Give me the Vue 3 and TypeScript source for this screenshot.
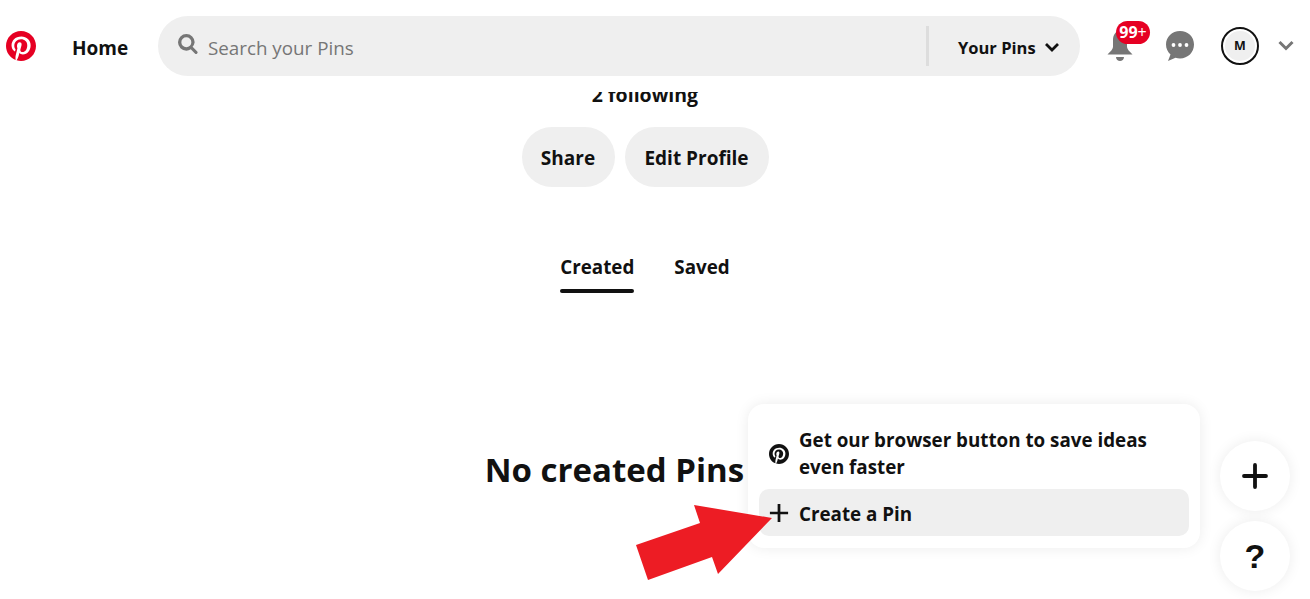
<script setup lang="ts">
const pinPath =
  'M0 12c0 5.123 3.211 9.497 7.73 11.218-.11-.937-.227-2.482.025-3.566.217-.932 1.401-5.938 1.401-5.938s-.357-.715-.357-1.774c0-1.66.962-2.9 2.161-2.9 1.02 0 1.512.765 1.512 1.682 0 1.025-.653 2.557-.99 3.978-.281 1.189.597 2.159 1.769 2.159 2.123 0 3.756-2.239 3.756-5.471 0-2.861-2.056-4.86-4.991-4.86-3.398 0-5.393 2.549-5.393 5.184 0 1.027.395 2.127.889 2.726a.36.36 0 0 1 .083.343c-.091.378-.293 1.189-.332 1.355-.053.218-.173.265-.4.159-1.492-.694-2.424-2.875-2.424-4.627 0-3.769 2.737-7.229 7.892-7.229 4.144 0 7.365 2.953 7.365 6.899 0 4.117-2.595 7.431-6.199 7.431-1.211 0-2.348-.63-2.738-1.373 0 0-.599 2.282-.744 2.84-.282 1.084-1.064 2.456-1.549 3.235C9.584 23.815 10.77 24 12 24c6.627 0 12-5.373 12-12S18.627 0 12 0 0 5.373 0 12'
</script>

<template>
  <div class="page">
    <header class="top">
      <svg class="logo" viewBox="0 0 24 24"><path :d="pinPath" fill="#e60023" /></svg>
      <a class="home">Home</a>
      <div class="search">
        <svg class="lens" viewBox="0 0 24 24"><path d="M10 16a6 6 0 1 1 0-12 6 6 0 0 1 0 12zm13.1 4.9-5.6-5.6A9.9 9.9 0 0 0 20 10 10 10 0 1 0 10 20c2 0 3.800-.6 5.300-1.600l5.600 5.600a2 2 0 0 0 2.200-3.100z" fill="#767676" /></svg>
        <span class="placeholder">Search your Pins</span>
        <span class="divider"></span>
        <span class="scope">Your Pins</span>
        <svg class="chev" viewBox="0 0 16 11"><path d="M2 2l6 6 6-6" fill="none" stroke="#111" stroke-width="2.800" /></svg>
      </div>
      <div class="bell-wrap">
        <svg class="bell" viewBox="0 0 26 32"><path d="M13 1C8.500 1 6 5 6 10v7c0 2-2.500 4.500-5.500 7.500h25C22.500 21.500 20 19 20 17v-7c0-5-2.500-9-7-9zM9 27h8c0 2.500-2 4-4 4s-4-1.500-4-4z" fill="#767676" /></svg>
        <span class="badge">99<span class="badge-plus">+</span></span>
      </div>
      <svg class="chat" viewBox="0 0 28 30"><path d="M14 0C6 0 0 6 0 13.500c0 4 1.800 7.600 4.500 10L2 30l7.500-3.200c1.400.4 3 .6 4.500.6 8 0 14-6 14-13.900S22 0 14 0z" fill="#767676" /><circle cx="7.500" cy="14" r="1.900" fill="#fff" /><circle cx="14" cy="14" r="1.900" fill="#fff" /><circle cx="20.500" cy="14" r="1.900" fill="#fff" /></svg>
      <div class="avatar"><span>M</span></div>
      <svg class="chev-grey" viewBox="0 0 16 11"><path d="M1.500 2l6.500 6.500L14.500 2" fill="none" stroke="#767676" stroke-width="3" /></svg>
    </header>

    <main class="profile">
      <p class="following">2 following</p>
      <div class="actions">
        <button class="pill">Share</button>
        <button class="pill">Edit Profile</button>
      </div>
      <nav class="tabs">
        <span class="tab active">Created</span>
        <span class="tab">Saved</span>
      </nav>
      <h1 class="empty">No created Pins yet</h1>
    </main>

    <aside class="popup">
      <div class="row tip">
        <svg class="row-ico small" viewBox="0 0 24 24"><path :d="pinPath" fill="#111" /></svg>
        <span>Get our browser button to save ideas even faster</span>
      </div>
      <div class="row create">
        <svg class="row-ico" viewBox="0 0 22 22"><path d="M11 1v20M1 11h20" stroke="#111" stroke-width="3" /></svg>
        <span>Create a Pin</span>
      </div>
    </aside>

    <button class="fab plus" aria-label="Create">
      <svg viewBox="0 0 26 26"><path d="M13 2v22M2 13h22" stroke="#111" stroke-width="3.800" stroke-linecap="round" /></svg>
    </button>
    <button class="fab help">?</button>

    <svg class="arrow" viewBox="0 0 1310 599"><polygon points="694,505 700,523 636,545 648,580 712,557 718,574 772,518" fill="#ed1c24" /></svg>
  </div>
</template>

<style>
html, body { margin: 0; background: #fff; overflow: hidden; }
</style>

<style scoped>
.page {
  position: relative;
  width: 1310px;
  height: 599px;
  overflow: hidden;
  font-family: "Open Sans", "Noto Sans", sans-serif;
  color: #111;
}
.top {
  position: absolute;
  inset: 0 0 auto 0;
  height: 92px;
  background: #fff;
  z-index: 2;
  display: flex;
  align-items: flex-start;
}
.logo { width: 30px; height: 30px; margin: 31px 0 0 6px; flex: none; }
.home { margin: 36px 0 0 36px; width: 56px; font-size: 19px; line-height: 25px; font-weight: 700; flex: none; }
.search {
  margin: 16px 0 0 30px;
  width: 922px;
  height: 60px;
  border-radius: 30px;
  background: #efefef;
  display: flex;
  align-items: center;
  flex: none;
}
.lens { width: 20px; height: 20px; margin: -4px 0 0 20px; flex: none; }
.placeholder { margin: 3px 0 0 10px; font-size: 18.800px; color: #767676; flex: 1; }
.divider { width: 3px; height: 40px; background: #ddd; flex: none; }
.scope { margin: 2px 0 0 29px; width: 78px; font-size: 16.500px; font-weight: 700; white-space: nowrap; flex: none; }
.chev { width: 16px; height: 11px; margin: 2px 20px 0 8px; flex: none; }
.bell-wrap { position: relative; margin: 30px 0 0 27px; width: 26px; height: 32px; flex: none; }
.bell { width: 26px; height: 32px; display: block; }
.badge {
  position: absolute;
  left: 9px;
  top: -9px;
  width: 34px;
  height: 23px;
  border-radius: 12px;
  background: #e60023;
  color: #fff;
  font-size: 16px;
  line-height: 23px;
  font-weight: 700;
  text-align: center;
}
.badge-plus { font-weight: 400; }
.chat { width: 28px; height: 30px; margin: 31px 0 0 33px; flex: none; }
.avatar {
  width: 38px;
  height: 38px;
  box-sizing: border-box;
  margin: 27px 0 0 27px;
  border: 2px solid #111;
  border-radius: 50%;
  background: #fff;
  padding: 2px;
  flex: none;
}
.avatar span {
  display: block;
  height: 30px;
  border-radius: 50%;
  background: #efefef;
  font-size: 12.500px;
  line-height: 30px;
  font-weight: 700;
  text-align: center;
}
.chev-grey { width: 16px; height: 11px; margin: 40px 0 0 19px; flex: none; }
.profile { display: flex; flex-direction: column; align-items: center; padding: 82px 20px 0 0; }
.following { margin: 0; font-size: 19.500px; line-height: 25px; font-weight: 700; }
.actions { display: flex; gap: 10px; margin-top: 20px; }
.pill {
  height: 60px;
  width: 93px;
  padding: 2px 0 0;
  border: 0;
  border-radius: 30px;
  background: #efefef;
  color: #111;
  font: 700 19px "Open Sans", "Noto Sans", sans-serif;
}
.pill + .pill { width: 144px; }
.tabs { display: flex; gap: 40px; margin-top: 68px; }
.tab { padding-bottom: 13px; width: max-content; font-size: 18.800px; line-height: 25px; font-weight: 700; position: relative; }
.tab.active::after {
  content: "";
  position: absolute;
  left: 0;
  right: 0;
  bottom: 0;
  height: 4px;
  border-radius: 2px;
  background: #111;
}
.empty { margin: 155px 0 0; font-size: 33px; line-height: 44px; font-weight: 700; white-space: nowrap; }
.popup {
  position: absolute;
  left: 748px;
  top: 404px;
  width: 452px;
  height: 144px;
  box-sizing: border-box;
  padding: 23px 11px 12px;
  background: #fff;
  border-radius: 16px;
  box-shadow: 0 0 14px rgba(0, 0, 0, .08);
  z-index: 1;
  display: flex;
  flex-direction: column;
  justify-content: space-between;
  font-size: 18.800px;
  font-weight: 700;
}
.row { display: flex; align-items: center; padding: 0 10px; }
.row-ico { width: 20px; height: 20px; margin-right: 10px; flex: none; }
.tip { line-height: 27px; }
.create { height: 47px; border-radius: 10px; background: #efefef; }
.create span { margin-top: 2px; }
.fab {
  position: absolute;
  left: 1220px;
  width: 70px;
  height: 70px;
  border: 0;
  border-radius: 50%;
  background: #fff;
  box-shadow: 0 0 14px rgba(0, 0, 0, .08);
  display: flex;
  align-items: center;
  justify-content: center;
  padding: 0;
}
.plus { top: 441px; }
.plus svg { width: 26px; height: 26px; }
.help { top: 521px; font: 700 34px "Liberation Sans", Arial, sans-serif; color: #111; }
.arrow { position: absolute; inset: 0; width: 1310px; height: 599px; z-index: 3; pointer-events: none; }
</style>
